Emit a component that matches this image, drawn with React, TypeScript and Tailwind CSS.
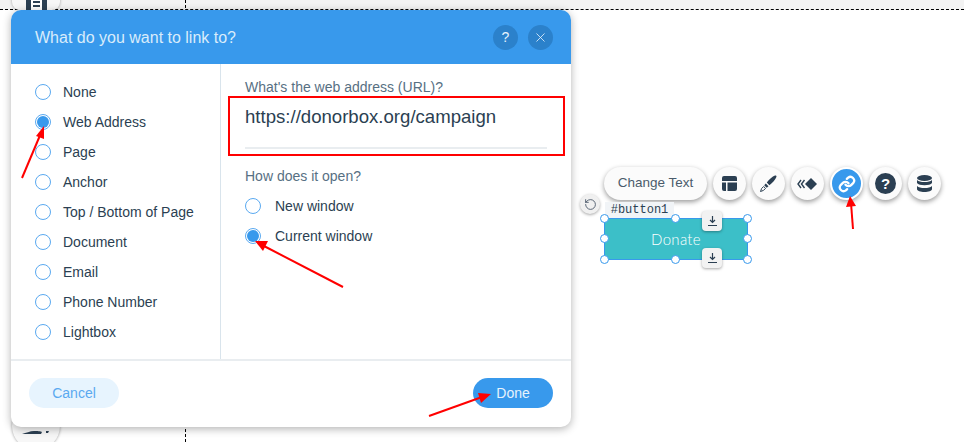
import { RotateCcw, X } from "lucide-react";

const font = "font-['Liberation_Sans',Arial,sans-serif]";

const linkTypes = [
  "None",
  "Web Address",
  "Page",
  "Anchor",
  "Top / Bottom of Page",
  "Document",
  "Email",
  "Phone Number",
  "Lightbox",
];

function Radio({ label, checked, gap }: { label: string; checked?: boolean; gap: string }) {
  return (
    <div className={`flex h-[30px] items-center ${gap}`}>
      <span className="flex h-4 w-4 flex-none items-center justify-center rounded-full border border-[#5aa9f0] bg-white">
        {checked && <span className="h-3 w-3 rounded-full bg-[#3899ec]" />}
      </span>
      <span className="text-[14px] text-[#2b3f52]">{label}</span>
    </div>
  );
}

function ToolCircle({ children, active }: { children: React.ReactNode; active?: boolean }) {
  return (
    <div
      className={`flex h-[33px] w-[33px] items-center justify-center rounded-full shadow-[0_2px_5px_rgba(0,0,0,0.4)] ${
        active ? "border-2 border-white bg-[#3899ec]" : "bg-[#fbfbfb]"
      }`}
    >
      {children}
    </div>
  );
}

function Handle({ className }: { className: string }) {
  return <span className={`absolute h-[9px] w-[9px] rounded-full border border-[#3899ec] bg-white ${className}`} />;
}

function DownloadBadge({ className }: { className: string }) {
  return (
    <div className={`absolute flex h-5 w-5 items-center justify-center rounded bg-[#f2f2f2] shadow-[0_1px_3px_rgba(0,0,0,0.35)] ${className}`}>
      <svg width="11" height="12" viewBox="0 0 11 12" fill="none" stroke="#2b3f52" strokeWidth="1.2">
        <path d="M5.5 1v6M3 5l2.5 2.5L8 5M1 10.5h9" />
      </svg>
    </div>
  );
}

export default function App() {
  return (
    <div className={`relative h-[442px] w-[964px] overflow-hidden bg-white ${font}`}>
      {/* editor canvas behind the dialog */}
      <div className="absolute left-0 top-0 h-[10px] w-full border-b border-dashed border-black bg-[#f3f3f3]" />
      <div className="absolute left-[185px] top-0 h-full border-l border-dashed border-black" />
      <div className="absolute left-[12px] top-[-20px] flex h-[30px] w-[48px] items-end justify-center rounded-b-lg bg-[#f7f7f7] shadow-[0_0_3px_rgba(0,0,0,0.35)]">
        <div className="flex h-[10px] w-[21px] justify-center bg-[#2b3f52]">
          <div className="flex w-[11px] flex-col gap-[2px] bg-white pt-[1px]">
            <span className="mx-[2px] h-[2px] bg-[#2b3f52]" />
            <span className="mx-[2px] h-[2px] bg-[#2b3f52]" />
          </div>
        </div>
      </div>
      <div className="absolute left-[12px] top-[402px] h-12 w-12 rounded-full bg-[#f7f7f7] shadow-[0_0_3px_rgba(0,0,0,0.4)]">
        <svg className="absolute left-[8px] top-[24px]" width="32" height="8" viewBox="0 0 32 8" fill="#2b3f52">
          <path d="M2 8c4-1 8-3 12-3 3 0 7 0 8 1l-1 2c-6 0-12 1-19 0zM26 5h3l-1 2h-2z" />
        </svg>
      </div>

      {/* dialog */}
      <div className="absolute left-[11px] top-[10px] flex h-[417px] w-[560px] flex-col overflow-hidden rounded-[10px] bg-white shadow-[0_2px_8px_rgba(0,0,0,0.3)]">
        <header className="flex h-[54px] flex-none items-center justify-between bg-[#3899ec] pl-6 pr-[18px]">
          <h1 className="pt-[1px] text-[16px] font-normal text-[#d9ecfb]">What do you want to link to?</h1>
          <div className="flex gap-[10px]">
            <button className="flex h-[25px] w-[25px] items-center justify-center rounded-full bg-[#2b81cb] text-[14px] text-[#e6f3fd]">?</button>
            <button className="flex h-[25px] w-[25px] items-center justify-center rounded-full bg-[#2b81cb] text-[#e6f3fd]">
              <X size={15} strokeWidth={1.3} />
            </button>
          </div>
        </header>

        <div className="flex flex-1">
          <aside className="w-[210px] flex-none border-r border-[#d9e4ec] pl-6 pt-[13px]">
            {linkTypes.map((type) => (
              <Radio key={type} label={type} checked={type === "Web Address"} gap="gap-[12px]" />
            ))}
          </aside>
          <main className="flex-1 pl-6 pr-6 pt-[15px]">
            <p className="text-[14px] leading-4 text-[#577083]">What's the web address (URL)?</p>
            <div className="relative mt-[9px] h-[45px] border-b-2 border-[#e9edf0]">
              <p className="pt-[1px] text-[18.6px] leading-6 text-[#2b3f52]">https://donorbox.org/campaign</p>
              <div className="absolute left-[-17px] top-[-8px] h-[60px] w-[337px] border-2 border-[#ff0000]" />
            </div>
            <p className="mt-[19px] text-[14px] leading-4 text-[#577083]">How does it open?</p>
            <div className="mt-[7px]">
              <Radio label="New window" gap="gap-[14px]" />
              <Radio label="Current window" checked gap="gap-[14px]" />
            </div>
          </main>
        </div>

        <footer className="flex h-[68px] flex-none items-center justify-between border-t-2 border-[#e9edf0] pb-[2px] pl-[18px] pr-[18px]">
          <button className="h-[30px] w-[90px] rounded-full bg-[#e7f4fe] text-[14px] text-[#5aa9f0]">Cancel</button>
          <button className="h-[30px] w-[80px] rounded-full bg-[#3899ec] text-[14px] text-[#e6f3fd]">Done</button>
        </footer>
      </div>

      {/* floating toolbar */}
      <div className="absolute left-[604px] top-[167px] flex items-center gap-[6px]">
        <div className="flex h-[33px] w-[103px] items-center justify-center rounded-full bg-[#fbfbfb] text-[13.5px] text-[#4a5b6b] shadow-[0_2px_5px_rgba(0,0,0,0.4)]">
          Change Text
        </div>
        <ToolCircle>
          <svg width="15" height="15" viewBox="0 0 15 15" fill="#2b3f52">
            <path d="M2 0h11a2 2 0 0 1 2 2v3H0V2a2 2 0 0 1 2-2zM0 6.500h4V15H2a2 2 0 0 1-2-2zM5.500 6.500H15V13a2 2 0 0 1-2 2H5.500z" />
          </svg>
        </ToolCircle>
        <ToolCircle>
          <svg width="17" height="17" viewBox="0 0 17 17" fill="#2b3f52">
            <path d="M15 .6c1-.4 1.800.4 1.400 1.400-1 2.500-3.800 6-7 8.200L6.800 7.600C9 4.500 12.500 1.600 15 .6z" />
            <path d="M5.800 8.500l2.700 2.700-1.800 1.600-2.500-2.500z" />
            <path d="M3.600 11.500l1.900 1.900-2 2L.5 16.500l1.100-3z" fill="none" stroke="#2b3f52" strokeWidth="1" />
          </svg>
        </ToolCircle>
        <ToolCircle>
          <svg width="21" height="14" viewBox="0 0 21 14" fill="#2b3f52">
            <path d="M14 1l6 6-6 6-6-6z" />
            <path d="M4 3 1 7l3 4M7.500 3 4.500 7l3 4" fill="none" stroke="#2b3f52" strokeWidth="1.400" />
          </svg>
        </ToolCircle>
        <ToolCircle active>
          <svg width="18" height="18" viewBox="0 0 24 24" fill="none" stroke="white" strokeWidth="3" strokeLinecap="round" strokeLinejoin="round">
            <path d="M10 13a5 5 0 0 0 7.500.5l3-3a5 5 0 0 0-7-7l-1.700 1.700" />
            <path d="M14 11a5 5 0 0 0-7.500-.5l-3 3a5 5 0 0 0 7 7l1.700-1.700" />
          </svg>
        </ToolCircle>
        <ToolCircle>
          <span className="flex h-[21px] w-[21px] items-center justify-center rounded-full bg-[#2b3f52] text-[15px] font-bold leading-none text-white">?</span>
        </ToolCircle>
        <ToolCircle>
          <svg width="15" height="18" viewBox="0 0 15 18" fill="#2b3f52">
            <ellipse cx="7.500" cy="3" rx="7.500" ry="3" />
            <path d="M0 5c1.500 1.500 4 2 7.500 2S13.500 6.500 15 5v3c-1 1.500-4 2.200-7.500 2.200S1 9.500 0 8z" />
            <path d="M0 10c1.500 1.500 4 2 7.500 2s6-.5 7.500-2v3c0 2-3.500 3-7.500 3S0 15 0 13z" transform="translate(0 1)" />
          </svg>
        </ToolCircle>
      </div>

      <div className="absolute left-[580px] top-[194px] flex h-5 w-5 items-center justify-center rounded-full bg-[#f0f0f0] shadow-[0_1px_3px_rgba(0,0,0,0.35)]">
        <RotateCcw size={13} color="#3b4a5c" strokeWidth={1.5} />
      </div>
      <div className="absolute left-[605px] top-[202px] flex h-4 w-[69px] items-center justify-center bg-[#f1f4f7] font-['Liberation_Mono',monospace] text-[12px] text-[#2b3f52]">
        #button1
      </div>

      {/* selected button */}
      <div className="absolute left-[604px] top-[218px] flex h-[42px] w-[144px] items-center justify-center border border-[#3899ec] bg-[#3cbfc8] font-['Lato',sans-serif] text-[15px] font-light tracking-[0.3px] text-white">
        Donate
        <Handle className="left-[-5px] top-[-5px]" />
        <Handle className="left-[66px] top-[-5px]" />
        <Handle className="right-[-5px] top-[-5px]" />
        <Handle className="left-[-5px] top-[15px]" />
        <Handle className="right-[-5px] top-[15px]" />
        <Handle className="bottom-[-5px] left-[-5px]" />
        <Handle className="bottom-[-5px] left-[66px]" />
        <Handle className="bottom-[-5px] right-[-5px]" />
        <DownloadBadge className="left-[97px] top-[-8px]" />
        <DownloadBadge className="bottom-[-9px] left-[97px]" />
      </div>

      {/* red annotation arrows */}
      <svg className="absolute left-0 top-0" width="964" height="442" fill="#ff0000" stroke="#ff0000" strokeWidth="2">
        <path d="M22 178 41 133" fill="none" />
        <path d="M44 126 36 136 44 139z" stroke="none" />
        <path d="M343 287 262 245" fill="none" />
        <path d="M255 241 268 241 263 251z" stroke="none" />
        <path d="M429 416 482 397" fill="none" />
        <path d="M491 394 478 393 481 403z" stroke="none" />
        <path d="M853 229 851 203" fill="none" />
        <path d="M850 196 846 207 856 206z" stroke="none" />
      </svg>
    </div>
  );
}
